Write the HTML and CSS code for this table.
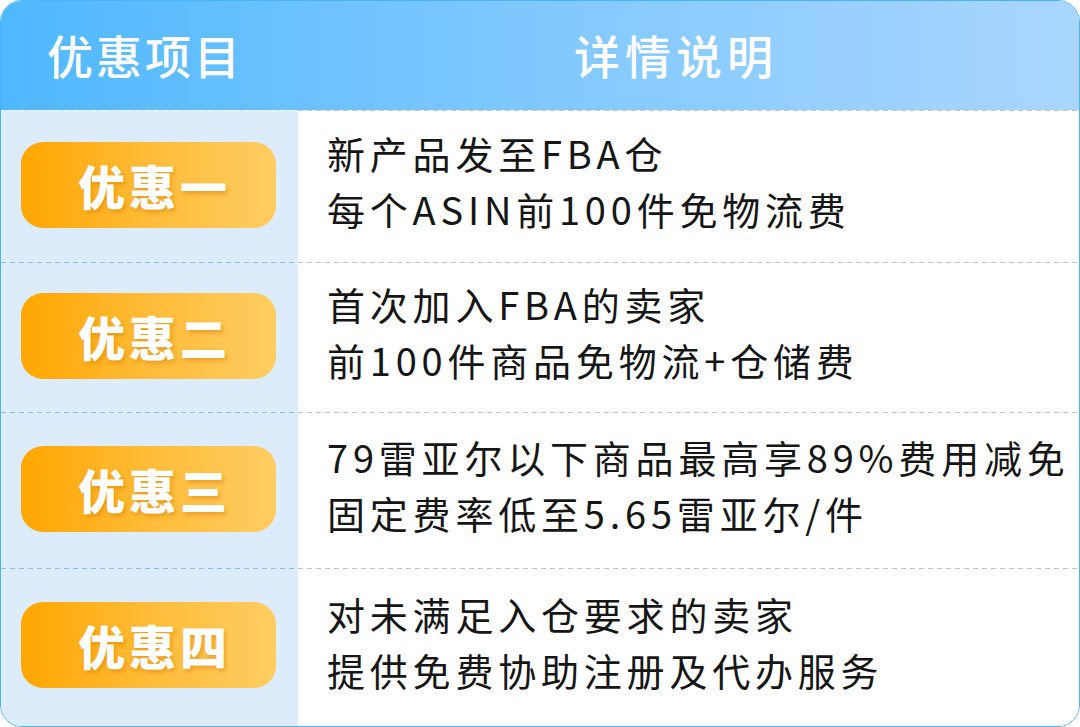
FILE: index.html
```html
<!DOCTYPE html>
<html lang="zh">
<head>
<meta charset="utf-8">
<link rel="stylesheet" href="styles.css">
</head>
<body>
<div class="table">
  <div class="head">
    <div class="hcell hleft">优惠项目</div>
    <div class="hcell hright">详情说明</div>
  </div>
  <div class="row r1 first">
    <div class="left"><div class="badge">优惠一</div></div>
    <div class="right"><p>新产品发至FBA仓<br>每个ASIN前100件免物流费</p></div>
  </div>
  <div class="row r2">
    <div class="left"><div class="badge">优惠二</div></div>
    <div class="right"><p>首次加入FBA的卖家<br>前100件商品免物流+仓储费</p></div>
  </div>
  <div class="row r3">
    <div class="left"><div class="badge">优惠三</div></div>
    <div class="right"><p>79雷亚尔以下商品最高享89%费用减免<br>固定费率低至5.65雷亚尔/件</p></div>
  </div>
  <div class="row r4">
    <div class="left"><div class="badge">优惠四</div></div>
    <div class="right"><p>对未满足入仓要求的卖家<br>提供免费协助注册及代办服务</p></div>
  </div>
</div>
</body>
</html>
```
FILE: styles.css
```css
html, body {
  margin: 0;
  padding: 0;
  background: #ffffff;
}
body {
  width: 1080px;
  height: 727px;
  overflow: hidden;
  font-family: "Noto Sans CJK SC", "Noto Sans", sans-serif;
}
.table {
  box-sizing: border-box;
  width: 1080px;
  height: 727px;
  border: 1.5px solid #4ab4fb;
  border-radius: 22px;
  overflow: hidden;
  display: flex;
  flex-direction: column;
  background: #ffffff;
}
.head {
  height: 108.5px;
  display: flex;
  align-items: center;
  background: linear-gradient(to right, #4fb8ff 0%, #7cc7ff 45%, #aad6ff 100%);
  color: #ffffff;
  font-size: 46px;
  font-weight: 500;
  letter-spacing: 3px;
}
.hcell {
  line-height: 1;
  padding-bottom: 2px;
}
.hleft {
  width: 297px;
  box-sizing: border-box;
  padding-left: 46px;
}
.hright {
  padding-left: 276px;
  letter-spacing: 5px;
}
.row {
  display: flex;
}
.r1 { height: 152px; }
.r2 { height: 150px; }
.r3 { height: 156px; }
.r4 { flex: 1; }
.left {
  width: 297px;
  flex: none;
  display: flex;
  align-items: center;
  justify-content: flex-start;
  padding-left: 20px;
  box-sizing: border-box;
  background: repeating-linear-gradient(to right, #7cc5fc 0 5px, transparent 5px 9px) top left / 100% 1px no-repeat, #ddecfb;
}
.first .left {
  background: repeating-linear-gradient(to right, #ffffff 0 5px, transparent 5px 9px) top left / 100% 1px no-repeat, #ddecfb;
}
.right {
  flex: 1;
  display: flex;
  align-items: center;
  padding-left: 29px;
  padding-bottom: 9px;
  box-sizing: border-box;
  background: repeating-linear-gradient(to right, #c4c4c4 0 5px, transparent 5px 9px) top left / 100% 1px no-repeat, #ffffff;
}
.r4 .left { padding-bottom: 2px; }
.right p {
  margin: 0;
  font-size: 38px;
  line-height: 56px;
  letter-spacing: 4.8px;
  color: #161616;
  font-weight: 400;
}
.badge {
  width: 255px;
  height: 86px;
  border-radius: 22px;
  background: linear-gradient(to right, #ffa600 0%, #ffbc38 50%, #ffcd62 100%);
  color: #ffffff;
  font-size: 47px;
  font-weight: 900;
  letter-spacing: 4px;
  display: flex;
  align-items: center;
  justify-content: center;
  padding-left: 12px;
  box-sizing: border-box;
  text-shadow: 2px 3px 4px rgba(214, 118, 0, 0.45);
  margin-top: -2px;
}
```
